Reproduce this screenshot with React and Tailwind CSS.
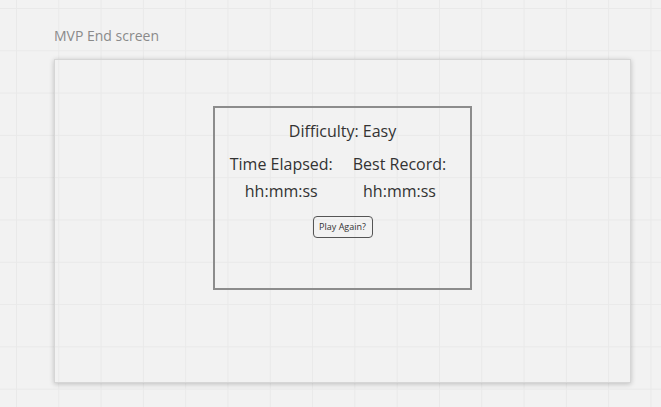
export default function App() {
  return (
    <div
      className="w-[661px] h-[407px] overflow-hidden bg-[#f2f2f2] bg-[linear-gradient(to_right,#e9e9e9_1px,transparent_1px),linear-gradient(to_bottom,#e9e9e9_1px,transparent_1px)] bg-[size:42.3px_42.3px] bg-[position:16px_8px] pl-[54px] pt-[26px]"
      style={{ fontFamily: '"Open Sans", "Liberation Sans", sans-serif' }}
    >
      {/* board title */}
      <div className="h-[20px] text-[14px] leading-[20px] text-[#8a8a8a]">MVP End screen</div>

      {/* frame */}
      <div className="mt-[13px] w-[577px] h-[324px] border border-[#d6d6d6] shadow-[0_1px_5px_rgba(0,0,0,0.22)] pl-[158px] pt-[46px]">
        <div className="w-[259px] h-[184px] border-2 border-[#8c8c8c] flex flex-col items-center text-[#333333]">
          <div className="mt-[12px] text-[16px] leading-[22px]">Difficulty: Easy</div>

          <div className="mt-[11px] mr-[9px] flex gap-[20px] text-[16px] leading-[22px]">
            <div className="flex flex-col items-center">
              <span>Time Elapsed:</span>
              <span className="mt-[5px]">hh:mm:ss</span>
            </div>
            <div className="flex flex-col items-center">
              <span>Best Record:</span>
              <span className="mt-[5px]">hh:mm:ss</span>
            </div>
          </div>

          <button className="mt-[14px] w-[60px] h-[22px] rounded-[4px] border border-[#555555] text-[9px] leading-[20px] text-[#333333]">
            Play Again?
          </button>
        </div>
      </div>
    </div>
  );
}
